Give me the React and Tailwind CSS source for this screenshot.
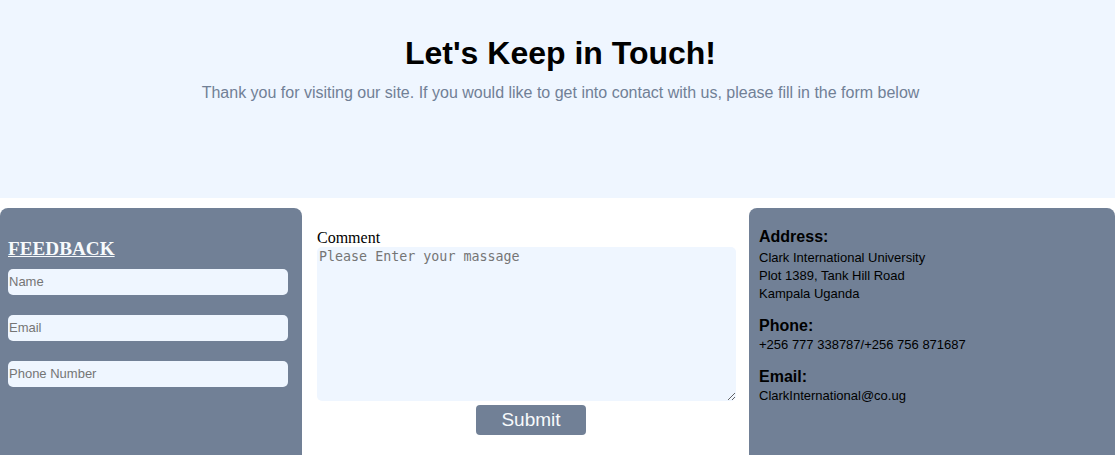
export default function App() {
  return (
    <div className="w-[1115px] bg-white" style={{ fontFamily: '"Liberation Sans", Arial, sans-serif' }}>
      <header className="h-[198px] bg-[#eff6ff] pl-[6px] pt-[35px] text-center">
        <h1 className="text-[32px] font-bold leading-[37px] text-black">Let's Keep in Touch!</h1>
        <p className="mt-[12px] text-[16px] leading-[18px] text-[#718096]">
          Thank you for visiting our site. If you would like to get into contact with us, please fill in the form below
        </p>
      </header>
      <section className="mt-[10px] flex h-[260px] items-stretch">
        <div className="w-[302px] shrink-0 rounded-[8px] bg-[#718096] px-[8px] pt-[30px]">
          <h3
            className="mb-[9px] text-[19.2px] font-bold leading-[22px] text-[#f7fafc] underline"
            style={{ fontFamily: '"Liberation Serif", "Times New Roman", serif' }}
          >
            FEEDBACK
          </h3>
          <div className="flex w-[280px] flex-col gap-[20px]">
            <input
              type="text"
              placeholder="Name"
              className="h-[26px] w-full rounded-[5px] bg-[#eff6ff] px-[1px] pb-[1px] text-[13px] outline-none placeholder:text-[#757575]"
            />
            <input
              type="text"
              placeholder="Email"
              className="h-[26px] w-full rounded-[5px] bg-[#eff6ff] px-[1px] pb-[1px] text-[13px] outline-none placeholder:text-[#757575]"
            />
            <input
              type="text"
              placeholder="Phone Number"
              className="h-[26px] w-full rounded-[5px] bg-[#eff6ff] px-[1px] pb-[1px] text-[13px] outline-none placeholder:text-[#757575]"
            />
          </div>
        </div>
        <div className="flex w-[447px] shrink-0 flex-col pl-[15px] pt-[21px]">
          <label
            className="text-[16px] leading-[18px] text-black"
            style={{ fontFamily: '"Liberation Serif", "Times New Roman", serif' }}
          >
            Comment
          </label>
          <textarea
            placeholder="Please Enter your massage"
            className="h-[154px] w-[419px] rounded-[5px] bg-[#eff6ff] px-[2px] py-[2px] text-[13.333px] leading-[16px] outline-none placeholder:text-[#757575]"
            style={{ fontFamily: '"DejaVu Sans Mono", monospace' }}
          />
          <button className="ml-[159px] mt-[4px] h-[30px] w-[110px] rounded-[4px] bg-[#718096] text-[19px] leading-[30px] text-[#f7fafc]">
            Submit
          </button>
        </div>
        <div className="w-[366px] shrink-0 rounded-[8px] bg-[#718096] pl-[10px] pt-[20px] text-black">
          <h4 className="text-[16px] font-bold leading-[18px]">Address:</h4>
          <p className="mt-[3px] text-[13px] leading-[18px]">
            Clark International University
            <br />
            Plot 1389, Tank Hill Road
            <br />
            Kampala Uganda
          </p>
          <h4 className="mt-[14px] text-[16px] font-bold leading-[18px]">Phone:</h4>
          <p className="mt-[1px] text-[13px] leading-[18px]">+256 777 338787/+256 756 871687</p>
          <h4 className="mt-[14px] text-[16px] font-bold leading-[18px]">Email:</h4>
          <p className="mt-[1px] text-[13px] leading-[18px]">ClarkInternational@co.ug</p>
        </div>
      </section>
    </div>
  );
}
